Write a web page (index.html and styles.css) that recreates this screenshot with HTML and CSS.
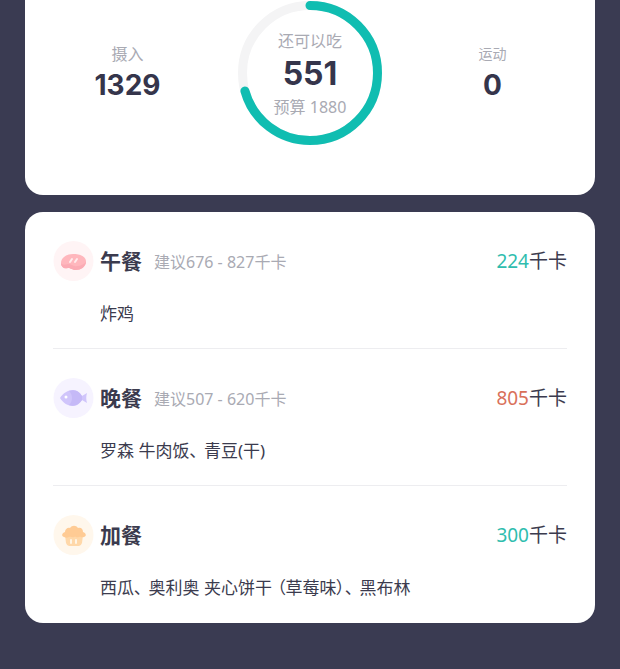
FILE: index.html
```html
<!DOCTYPE html>
<html lang="zh-CN">
<head>
  <meta charset="utf-8">
  <meta name="viewport" content="width=device-width, initial-scale=1">
  <title>饮食记录</title>
  <link rel="stylesheet" href="styles.css">
</head>
<body>

  <section class="card summary">
    <div class="stat">
      <span class="label">摄入</span>
      <strong class="number">1329</strong>
    </div>

    <div class="ring">
      <svg class="ring-chart" viewBox="0 0 144 144" aria-hidden="true">
        <circle class="ring-track" cx="72" cy="72" r="67.5"/>
        <circle class="ring-value" cx="72" cy="72" r="67.5" pathLength="1880" stroke-dasharray="1329 1880" transform="rotate(-90 72 72)"/>
      </svg>
      <div class="ring-text">
        <span class="label">还可以吃</span>
        <strong class="number big">551</strong>
        <span class="label">预算 1880</span>
      </div>
    </div>

    <div class="stat">
      <span class="label small">运动</span>
      <strong class="number">0</strong>
    </div>
  </section>

  <ul class="card meals">
    <li class="meal">
      <div class="meal-head">
        <svg class="icon" viewBox="0 0 42 42" aria-hidden="true">
          <circle cx="20.5" cy="21" r="20" fill="#fff4f5"/>
          <path d="M8 23c0-5 5-9 12-9 8 0 14 3 13 9-1 4-5 7-10 7-4 0-5-2-8-2-4 1-7-1-7-5z" fill="#ffb7bd"/>
          <path d="M8 23c1 2 4 2 7 1 4 0 5 3 9 2 4 0 7-2 9-4-1 5-5 8-10 8-4 0-5-2-8-2-4 1-7-1-7-5z" fill="#fbabb4"/>
          <path d="M19 19l-2 3M24 19l-2 3" stroke="#ffeced" stroke-width="2" stroke-linecap="round"/>
        </svg>
        <h2>午餐</h2>
        <span class="advice">建议676 - 827千卡</span>
        <span class="kcal"><b class="ok">224</b>千卡</span>
      </div>
      <p class="foods">炸鸡</p>
    </li>

    <li class="meal">
      <div class="meal-head">
        <svg class="icon" viewBox="0 0 42 42" aria-hidden="true">
          <circle cx="20.5" cy="21" r="20" fill="#f6f3ff"/>
          <path d="M7 21c3-5 8-8 13-8 4 0 7 3 9 6l5-3c-1 3-1 7 0 10l-5-3c-2 3-5 6-9 6-5 0-10-3-13-8z" fill="#d0c5fb"/>
          <path d="M16 14c4 4 4 10 0 14 6 2 10-1 13-5v-4c-3-5-7-7-13-5z" fill="#c5b9f7"/>
          <circle cx="13" cy="20" r="1.5" fill="#fff"/>
        </svg>
        <h2>晚餐</h2>
        <span class="advice">建议507 - 620千卡</span>
        <span class="kcal"><b class="over">805</b>千卡</span>
      </div>
      <p class="foods">罗森 牛肉饭<span class="sep">、</span>青豆(干)</p>
    </li>

    <li class="meal">
      <div class="meal-head">
        <svg class="icon" viewBox="0 0 42 42" aria-hidden="true">
          <circle cx="20.5" cy="21" r="20" fill="#fff7ec"/>
          <path d="M12 21h18l-1 8q-1 3-3 3H16q-2 0-3-3z" fill="#ffd8a9"/>
          <path d="M11 23c-3-1-2-4 1-5 0-3 3-5 5-4 2-3 6-3 8 0 3-1 5 1 5 4 3 1 4 4 1 5-3 1-3-1-5 0-3 1-3-1-5 0-2 1-3-1-5 0-2 1-3 1-5 0z" fill="#ffcb94"/>
          <path d="M18 26v3M23 26v3" stroke="#fff5e6" stroke-width="2" stroke-linecap="round"/>
        </svg>
        <h2>加餐</h2>
        <span class="kcal"><b class="ok">300</b>千卡</span>
      </div>
      <p class="foods">西瓜<span class="sep">、</span>奥利奥 夹心饼干<span class="open">（</span>草莓味）<span class="sep">、</span>黑布林</p>
    </li>
  </ul>

</body>
</html>
```

FILE: styles.css
```css
* {
  box-sizing: border-box;
}

body {
  margin: 0;
  padding: 0 25px 46px;
  background-color: #3a3b52;
  color: #3b3b4e;
  font-family: "Noto Sans", "Noto Sans CJK SC", sans-serif;
}

.card {
  margin: 0;
  background-color: #ffffff;
  border-radius: 18px;
}

/* summary */
.summary {
  display: grid;
  grid-template-columns: 1fr 160px 1fr;
  justify-items: center;
  align-items: center;
  padding: 1px 0 50px;
  border-radius: 0 0 18px 18px;
}

.stat,
.ring-text {
  display: flex;
  flex-direction: column;
  align-items: center;
}

.stat {
  padding-bottom: 6px;
}

.ring-text {
  padding-top: 2px;
}

.label {
  color: #a9aab3;
  font-size: 16px;
  line-height: 30px;
}

.label.small {
  font-size: 14px;
}

.number {
  color: #35354b;
  font-family: Inter, sans-serif;
  font-size: 28px;
  font-weight: 700;
  line-height: 32px;
}

.number.big {
  font-size: 32px;
  line-height: 36px;
}

.ring {
  display: grid;
  place-items: center;
}

.ring-chart,
.ring-text {
  grid-area: 1 / 1;
}

.ring-chart {
  width: 144px;
  height: 144px;
}

.ring-track,
.ring-value {
  fill: none;
  stroke: #f4f4f5;
  stroke-width: 9;
}

.ring-value {
  stroke: #10bdb1;
  stroke-linecap: round;
}

/* meals */
.meals {
  margin-top: 17px;
  padding: 0 28px;
  list-style: none;
}

.meal {
  padding: 28px 0 22px;
  border-bottom: 1px solid #ededf0;
}

.meal:last-child {
  padding-bottom: 23px;
  border-bottom: none;
}

.meal-head {
  display: flex;
  align-items: center;
}

.icon {
  width: 42px;
  height: 42px;
  margin-right: 5px;
}

h2 {
  margin: 0 12px 0 0;
  font-size: 21px;
  line-height: 42px;
}

.advice {
  color: #a9aab3;
  font-size: 16px;
}

.kcal {
  margin-left: auto;
  padding-bottom: 2px;
  font-size: 19px;
}

.kcal b {
  font-weight: 400;
}

.ok {
  color: #2fbdae;
}

.over {
  color: #d9705a;
}

.foods {
  margin: 20px 0 0 47px;
  font-size: 17px;
  line-height: 24px;
  font-feature-settings: "palt";
}

.sep {
  margin-right: 6px;
}

.open {
  margin-left: 5px;
}
```
